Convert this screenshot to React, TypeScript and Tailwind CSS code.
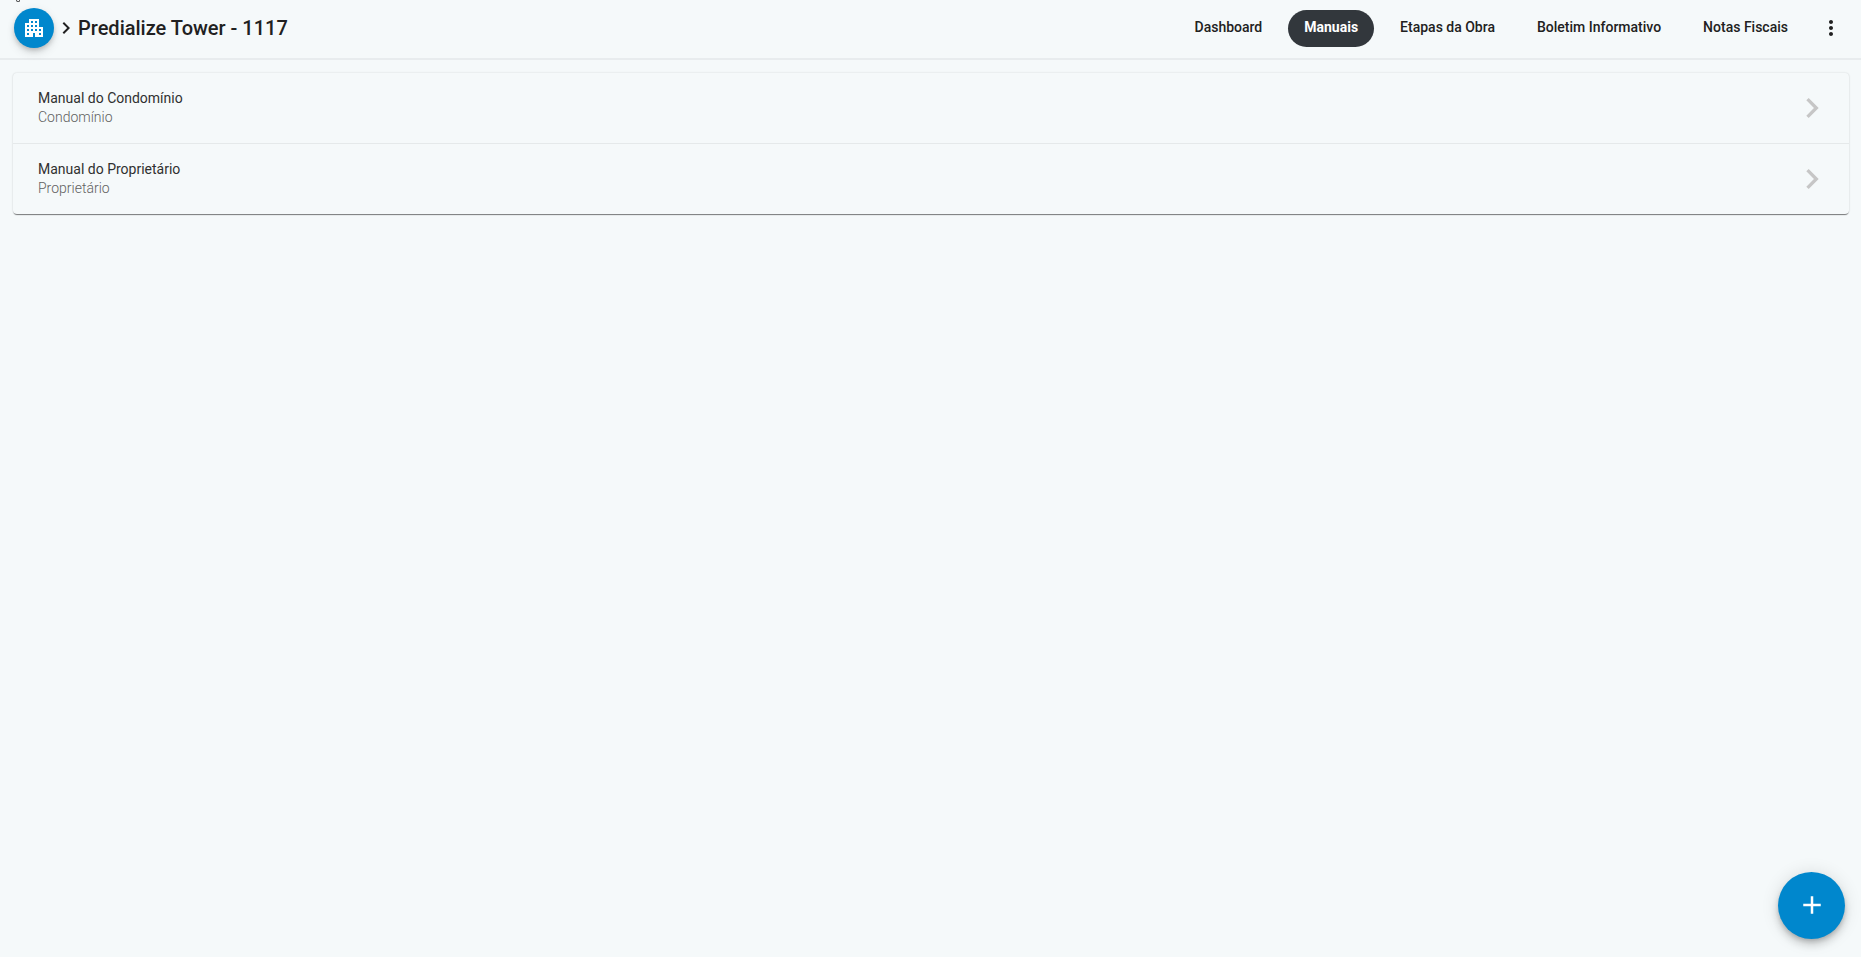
import { MdAdd, MdApartment, MdChevronRight, MdMoreVert } from "react-icons/md";

const tabs = ["Dashboard", "Manuais", "Etapas da Obra", "Boletim Informativo", "Notas Fiscais"];

const manuals = [
  { title: "Manual do Condomínio", kind: "Condomínio" },
  { title: "Manual do Proprietário", kind: "Proprietário" },
];

function Header({ active }: { active: string }) {
  return (
    <header className="flex h-15 items-center border-b-2 border-[#e8ecee] pr-[18px] pb-0.5 pl-3.5">
      <a
        href="#inicio"
        aria-label="Início"
        className="flex size-10 items-center justify-center rounded-full bg-[#0087cd] text-white shadow-[0_3px_5px_-1px_rgba(0,0,0,0.2),0_6px_10px_0_rgba(0,0,0,0.08),0_1px_10px_0_rgba(0,0,0,0.06)]"
      >
        <MdApartment className="size-6" />
      </a>
      <MdChevronRight className="size-6 text-[#212121]" />
      <h1 className="text-xl font-medium text-[#212121]">Predialize Tower - 1117</h1>
      <nav className="ml-auto flex items-center gap-2.5">
        {tabs.map((tab) => (
          <a
            key={tab}
            href="#"
            aria-current={tab === active ? "page" : undefined}
            className={
              tab === active
                ? "flex h-[37px] items-center rounded-full bg-[#32373c] px-4 pb-0.5 text-sm font-bold text-white"
                : "flex h-[37px] items-center px-4 pb-0.5 text-sm font-medium text-[#212121]"
            }
          >
            {tab}
          </a>
        ))}
      </nav>
      <button type="button" aria-label="Mais opções" className="ml-[15px] text-[#212121]">
        <MdMoreVert className="size-6" />
      </button>
    </header>
  );
}

export default function App() {
  return (
    <div className="relative min-h-screen overflow-hidden bg-[#f5f9fa] font-['Roboto',sans-serif]">
      <span
        aria-hidden="true"
        className="absolute top-0 left-4 h-0.5 w-1 rounded-b-full border-x border-b border-[#424242]"
      />
      <Header active="Manuais" />
      <main className="px-3 pt-[13px]">
        <ul className="ml-px divide-y divide-[#e5e9ea] rounded-sm shadow-[0_2px_1px_-1px_rgba(0,0,0,0.4),0_1px_1px_0_rgba(0,0,0,0.14),0_0_2px_0_rgba(0,0,0,0.16)]">
          {manuals.map((manual) => (
            <li key={manual.title}>
              <a href="#" className="flex h-[70px] items-center justify-between pr-[17px] pl-[25px]">
                <span className="flex flex-col text-sm leading-[19px]">
                  <span className="text-[#303030]">{manual.title}</span>
                  <span className="font-light text-[#616161]">{manual.kind}</span>
                </span>
                <MdChevronRight className="size-10 text-[#c6c6c6]" />
              </a>
            </li>
          ))}
        </ul>
      </main>
      <button
        type="button"
        aria-label="Adicionar manual"
        className="fixed right-4 bottom-[18px] flex size-[67px] items-center justify-center rounded-full bg-[#0087cd] pb-px text-white shadow-[0_3px_5px_-1px_rgba(0,0,0,0.2),0_6px_10px_0_rgba(0,0,0,0.14),0_1px_18px_0_rgba(0,0,0,0.12)]"
      >
        <MdAdd className="size-[30px]" />
      </button>
    </div>
  );
}
